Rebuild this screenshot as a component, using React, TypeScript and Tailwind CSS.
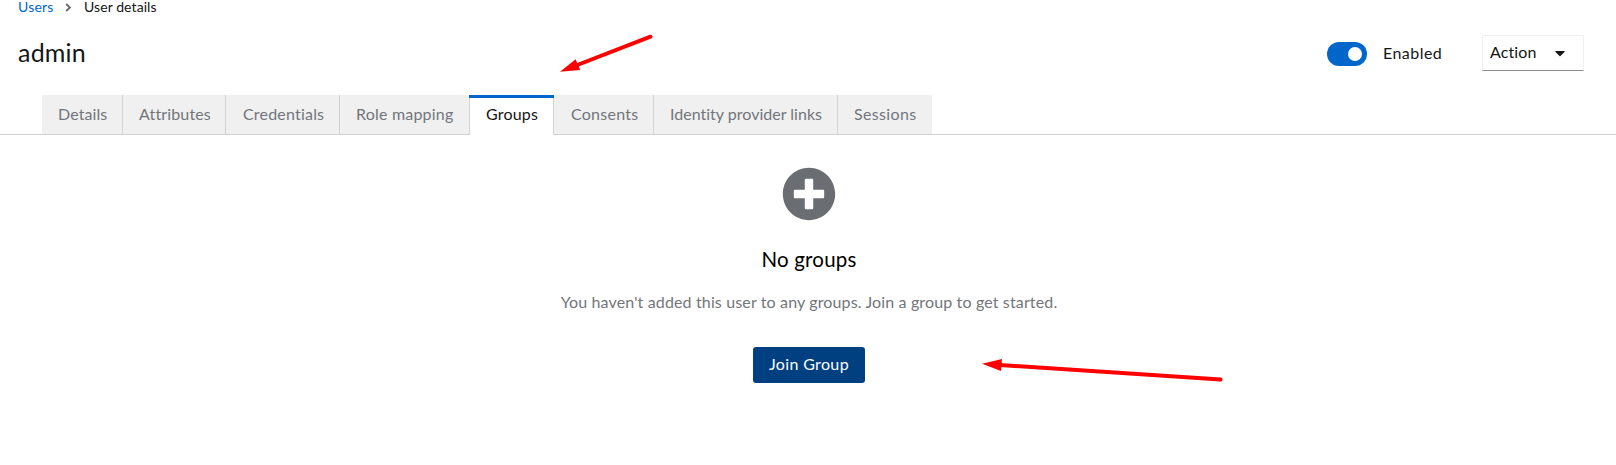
import React from "react";
import { FaCaretDown, FaPlusCircle } from "react-icons/fa";

const tabs = [
  { label: "Details", cls: "w-[81px] pl-4 tracking-[0.1px]" },
  { label: "Attributes", cls: "w-[103px] pl-4 tracking-[0.15px]" },
  { label: "Credentials", cls: "w-[114px] pl-[17px] tracking-[0.2px]" },
  { label: "Role mapping", cls: "w-[130px] pl-4 tracking-[0.2px]" },
  { label: "Groups", cls: "w-[84px] pl-4 tracking-[0.2px]", active: true },
  { label: "Consents", cls: "w-[100px] pl-[17px] tracking-[0.25px]" },
  { label: "Identity provider links", cls: "w-[184px] pl-4 tracking-[0.01px]" },
  { label: "Sessions", cls: "w-[94px] pl-4 tracking-[0.35px]", last: true },
];

export default function App() {
  return (
    <div className="relative h-[465px] w-[1616px] overflow-hidden bg-white font-['Lato','Open_Sans',sans-serif] text-[16px] leading-6 text-[#151515]">
      <nav className="flex h-[18px] items-start pl-[18px] text-[14px] leading-[14px]">
        <a className="w-[36px] whitespace-nowrap tracking-[0.2px] text-[#0066cc]">Users</a>
        <svg className="ml-[11px] mt-[3px]" width="7" height="9" viewBox="0 0 7 9" fill="none" stroke="#6a6e73" strokeWidth="1.9">
          <path d="M1.2 1 4.9 4.5 1.2 8" />
        </svg>
        <span className="ml-[12px] whitespace-nowrap tracking-[0.08px]">User details</span>
      </nav>

      <header className="flex h-[77px] items-start pl-[18px] pr-8">
        <h1 className="mt-[17px] text-[25px] leading-[34px] tracking-[0.2px]">admin</h1>
        <div className="ml-auto mt-6 flex h-6 w-10 items-center justify-end rounded-full bg-[#0066cc] pr-[5px]">
          <span className="size-[14px] rounded-full bg-white" />
        </div>
        <span className="ml-4 mt-[23px] w-[99px] tracking-[0.45px]">Enabled</span>
        <button className="mt-[17px] flex h-9 w-[102px] items-center border border-[#f0f0f0] border-b-[#8a8d90] pl-[7px]">
          <span className="mb-[2px] w-[62px] text-left tracking-[0.1px]">Action</span>
          <FaCaretDown className="mb-px size-4" />
        </button>
      </header>

      <div className="flex h-10 border-b border-[#d2d2d2] pl-[42px]">
        {tabs.map((t) =>
          t.active ? (
            <div key={t.label} className={`relative h-10 border-r border-[#d2d2d2] bg-white pt-[7px] whitespace-nowrap ${t.cls}`}>
              <span className="absolute -left-px -right-px top-0 h-[3px] bg-[#0066cc]" />
              {t.label}
            </div>
          ) : (
            <div key={t.label} className={`h-[39px] bg-[#f0f0f0] pt-[7px] whitespace-nowrap text-[#72767b] ${t.last ? "" : "border-r border-[#d2d2d2]"} ${t.cls}`}>
              {t.label}
            </div>
          )
        )}
      </div>

      <main className="flex flex-col items-center pl-[2px] pt-8">
        <FaPlusCircle className="size-[54px] text-[#6a6e73]" />
        <h2 className="mt-[23px] text-[20.5px] leading-[30px] tracking-[0.2px] text-black">No groups</h2>
        <p className="mt-4 whitespace-nowrap tracking-[0.14px] text-[#72767b]">
          You haven't added this user to any groups. Join a group to get started.
        </p>
        <button className="mt-[33px] h-9 w-[112px] rounded-[3px] bg-[#004080] pb-[2px] tracking-[0.35px] text-white">Join Group</button>
      </main>

      <svg className="pointer-events-none absolute left-0 top-0" width="1616" height="465" fill="#ff0000" stroke="#ff0000">
        <path d="M576 65.5 650.5 36.7" strokeWidth="4" strokeLinecap="round" />
        <path d="M560 71.7 575.6 59.2 580.2 70Z" stroke="none" />
        <path d="M1000 365 1220.5 379.5" strokeWidth="4" strokeLinecap="round" />
        <path d="M982 363.8 1002 359 1001 371Z" stroke="none" />
      </svg>
    </div>
  );
}
